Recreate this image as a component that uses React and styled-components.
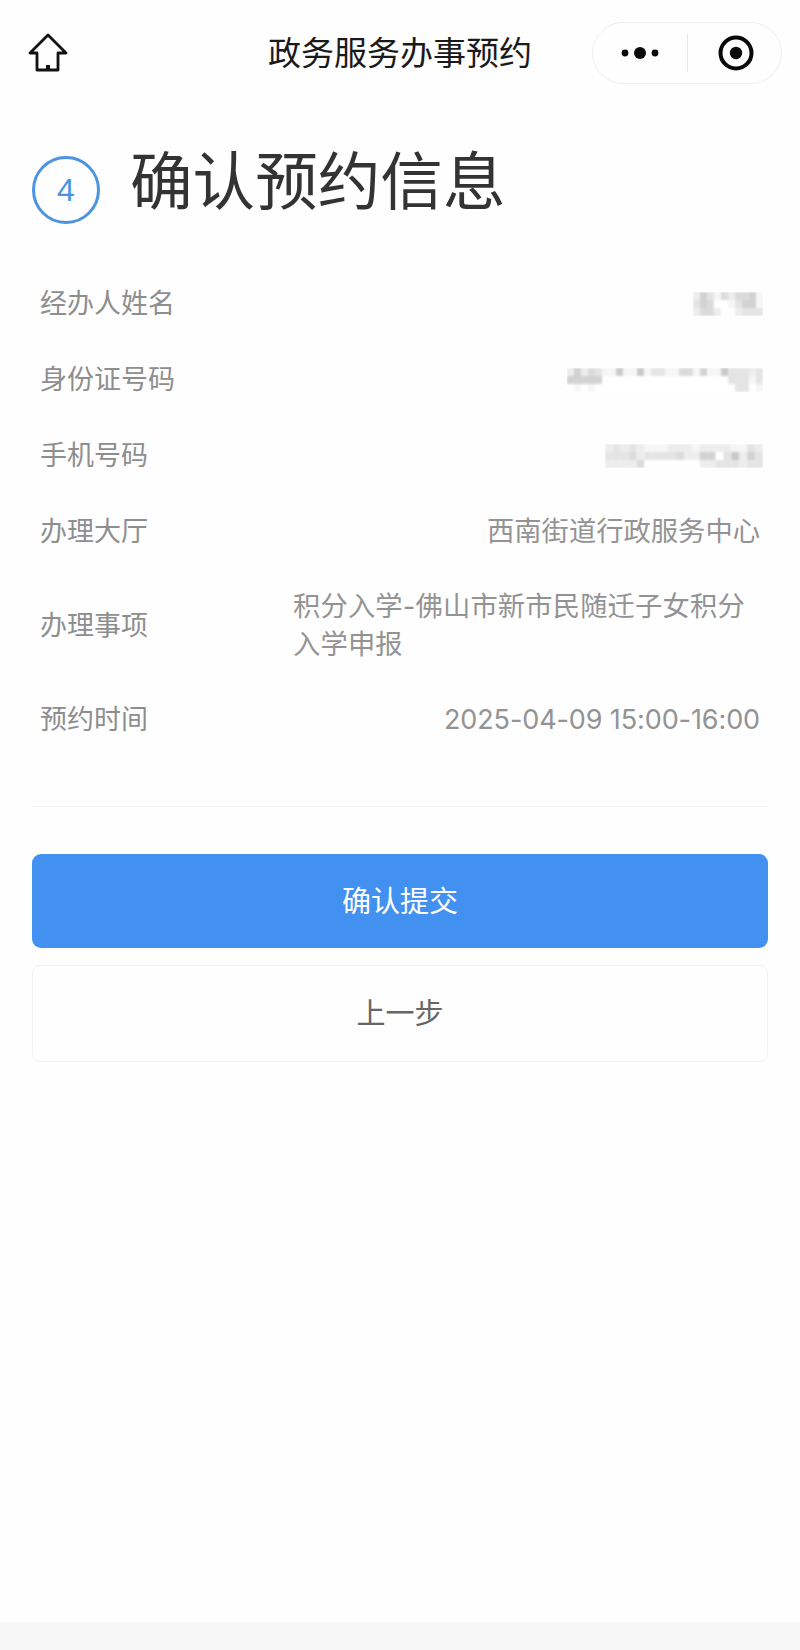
import React from 'react';
import styled, { createGlobalStyle } from 'styled-components';

const GlobalStyle = createGlobalStyle`
  html, body {
    margin: 0;
    padding: 0;
    background: #fefefe;
  }
  body {
    font-family: "Liberation Sans", "Noto Sans CJK SC", sans-serif;
  }
`;

const Page = styled.div`
  width: 800px;
  height: 1650px;
  display: flex;
  flex-direction: column;
  background: #fefefe;
  overflow: hidden;
`;

const NavBar = styled.header`
  height: 106px;
  flex-shrink: 0;
  display: flex;
  align-items: center;
  justify-content: space-between;
  padding: 0 18px 0 28px;
  position: relative;
`;

const NavTitle = styled.h1`
  position: absolute;
  left: 0;
  right: 0;
  top: 31px;
  margin: 0;
  text-align: center;
  font-size: 33px;
  line-height: 46px;
  font-weight: 400;
  color: #1a1a1a;
`;

const Capsule = styled.div`
  width: 190px;
  height: 62px;
  box-sizing: border-box;
  border: 1px solid #efefef;
  border-radius: 31px;
  display: flex;
  align-items: center;
`;

const CapsuleSlot = styled.div`
  flex: 1;
  display: flex;
  align-items: center;
  justify-content: center;
`;

const CapsuleDivider = styled.div`
  width: 1px;
  height: 38px;
  background: #e8e8e8;
`;

const Content = styled.main`
  flex: 1;
  padding: 46px 32px 0;
`;

const StepHeading = styled.div`
  display: flex;
  align-items: flex-start;
  gap: 30px;
  height: 114px;
`;

const StepBadge = styled.div`
  width: 68px;
  height: 68px;
  margin-top: 4px;
  box-sizing: border-box;
  border: 3.5px solid #4d94e0;
  border-radius: 50%;
  display: flex;
  align-items: center;
  justify-content: center;
  color: #4d94e0;
  font-size: 32px;
`;

const StepTitle = styled.h2`
  margin: -13px 0 0;
  font-size: 62.6px;
  line-height: 86px;
  font-weight: 400;
  color: #333;
`;

const InfoList = styled.dl`
  margin: 0;
  padding: 0 8px;
  display: flex;
  flex-direction: column;
`;

const InfoRow = styled.div`
  display: flex;
  align-items: center;
  justify-content: space-between;
  height: ${p => (p.$tall ? '112px' : '76px')};
`;

const Label = styled.dt`
  font-size: 27px;
  line-height: 38px;
  color: #8e8e8e;
  white-space: nowrap;
`;

const Value = styled.dd`
  margin: 0;
  font-family: Inter, "Noto Sans CJK SC", sans-serif;
  font-size: 27.3px;
  line-height: 38px;
  color: #939393;
  text-align: ${p => (p.$wrap ? 'left' : 'right')};
  width: ${p => (p.$wrap ? '467px' : 'auto')};
  letter-spacing: ${p => (p.$wrap ? '0.15px' : '0')};
`;

const TimeValue = styled(Value)`
  font-size: 27px;
  letter-spacing: -0.1px;
`;

const MosaicSvg = styled.svg`
  display: block;
  margin-right: -3px;
`;

const Divider = styled.hr`
  margin: 48px 0 47px;
  border: 0;
  height: 1px;
  background: #f1f1f1;
`;

const PrimaryButton = styled.button`
  display: block;
  width: 100%;
  height: 94px;
  padding: 0 0 4px;
  border: 0;
  border-radius: 9px;
  background: #4291f0;
  color: #fff;
  font: inherit;
  font-size: 29px;
`;

const SecondaryButton = styled.button`
  display: block;
  width: 100%;
  height: 97px;
  margin-top: 17px;
  padding: 0 0 5px;
  box-sizing: border-box;
  border: 1px solid #f3f3f3;
  border-radius: 8px;
  background: #fefefe;
  color: #666;
  font: inherit;
  font-size: 29px;
`;

const BottomBar = styled.footer`
  height: 28px;
  flex-shrink: 0;
  background: #f7f7f7;
`;

const HomeIcon = () => (
  <svg width="40" height="40" viewBox="0 0 40 40" fill="none" stroke="#111" strokeWidth="2.8" strokeLinejoin="round">
    <path d="M20 2 L38 20 L30 20 L30 37 L9 37 L9 20 L2 20 Z" />
    <path d="M20 32 V37" strokeWidth="4" />
  </svg>
);

const DotsIcon = () => (
  <svg width="42" height="14" viewBox="0 0 42 14" fill="#0a0a0a">
    <circle cx="6" cy="7" r="3.4" />
    <circle cx="21" cy="7" r="6" />
    <circle cx="36" cy="7" r="3.4" />
  </svg>
);

const TargetIcon = () => (
  <svg width="39" height="36" viewBox="-3 0 39 36">
    <circle cx="18" cy="18" r="15.5" fill="none" stroke="#0a0a0a" strokeWidth="4" />
    <circle cx="18" cy="18" r="6.2" fill="#0a0a0a" />
  </svg>
);

// shades for the redacted values, one string of 0-9 per mosaic row (0 is white)
const Mosaic = ({ rows, cellW = 7, cellH = 8 }) => {
  const w = rows[0].length * cellW;
  const h = rows.length * cellH;
  return (
    <MosaicSvg width={w} height={h} viewBox={`0 0 ${w} ${h}`}>
      <defs>
        <filter id="soft"><feGaussianBlur stdDeviation="1" /></filter>
      </defs>
      <g filter="url(#soft)">
        {rows.map((row, y) =>
          row.split('').map((c, x) => {
            const v = 255 - Number(c) * 9;
            return <rect key={`${x}-${y}`} x={x * cellW} y={y * cellH} width={cellW} height={cellH} fill={`rgb(${v},${v},${v})`} />;
          })
        )}
      </g>
    </MosaicSvg>
  );
};

const NAME_MOSAIC = ['2531424451', '3540013551', '2442002333'];
const ID_MOSAIC = [
  '2524311611613311441511633323',
  '5555500000000000000000033313',
  '0101000000000000000000003301',
];
const PHONE_MOSAIC = [
  '23232111222122221132',
  '33342333342255036253',
  '22224000000022333233',
];

const App = () => (
  <Page>
    <GlobalStyle />
    <NavBar>
      <HomeIcon />
      <NavTitle>政务服务办事预约</NavTitle>
      <Capsule>
        <CapsuleSlot><DotsIcon /></CapsuleSlot>
        <CapsuleDivider />
        <CapsuleSlot><TargetIcon /></CapsuleSlot>
      </Capsule>
    </NavBar>
    <Content>
      <StepHeading>
        <StepBadge>4</StepBadge>
        <StepTitle>确认预约信息</StepTitle>
      </StepHeading>
      <InfoList>
        <InfoRow>
          <Label>经办人姓名</Label>
          <Value><Mosaic rows={NAME_MOSAIC} /></Value>
        </InfoRow>
        <InfoRow>
          <Label>身份证号码</Label>
          <Value><Mosaic rows={ID_MOSAIC} /></Value>
        </InfoRow>
        <InfoRow>
          <Label>手机号码</Label>
          <Value><Mosaic rows={PHONE_MOSAIC} cellW={7.9} /></Value>
        </InfoRow>
        <InfoRow>
          <Label>办理大厅</Label>
          <Value>西南街道行政服务中心</Value>
        </InfoRow>
        <InfoRow $tall>
          <Label>办理事项</Label>
          <Value $wrap>积分入学-佛山市新市民随迁子女积分入学申报</Value>
        </InfoRow>
        <InfoRow>
          <Label>预约时间</Label>
          <TimeValue>2025-04-09 15:00-16:00</TimeValue>
        </InfoRow>
      </InfoList>
      <Divider />
      <PrimaryButton>确认提交</PrimaryButton>
      <SecondaryButton>上一步</SecondaryButton>
    </Content>
    <BottomBar />
  </Page>
);

export default App;
